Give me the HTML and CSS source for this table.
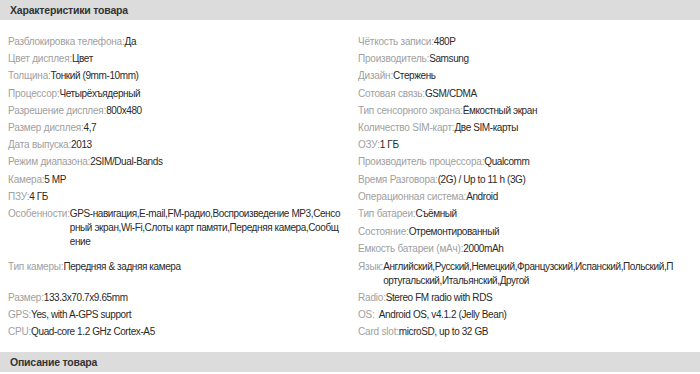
FILE: index.html
```html
<!DOCTYPE html>
<html lang="ru">
<head>
<meta charset="utf-8">
<link rel="stylesheet" href="styles.css">
</head>
<body>
<div class="section">
  <h2 class="bar">Характеристики товара</h2>
  <ul class="specs">
    <li><span class="k">Разблокировка телефона:</span><span class="v">Да</span></li>
    <li><span class="k">Чёткость записи:</span><span class="v">480P</span></li>
    <li><span class="k">Цвет дисплея:</span><span class="v">Цвет</span></li>
    <li><span class="k">Производитель:</span><span class="v">Samsung</span></li>
    <li><span class="k">Толщина:</span><span class="v">Тонкий (9mm-10mm)</span></li>
    <li><span class="k">Дизайн:</span><span class="v">Стержень</span></li>
    <li><span class="k">Процессор:</span><span class="v">Четырёхъядерный</span></li>
    <li><span class="k">Сотовая связь:</span><span class="v">GSM/CDMA</span></li>
    <li><span class="k">Разрешение дисплея:</span><span class="v">800x480</span></li>
    <li><span class="k">Тип сенсорного экрана:</span><span class="v">Ёмкостный экран</span></li>
    <li><span class="k">Размер дисплея:</span><span class="v">4,7</span></li>
    <li><span class="k">Количество SIM-карт:</span><span class="v">Две SIM-карты</span></li>
    <li><span class="k">Дата выпуска:</span><span class="v">2013</span></li>
    <li><span class="k">ОЗУ:</span><span class="v">1 ГБ</span></li>
    <li><span class="k">Режим диапазона:</span><span class="v">2SIM/Dual-Bands</span></li>
    <li><span class="k">Производитель процессора:</span><span class="v">Qualcomm</span></li>
    <li><span class="k">Камера:</span><span class="v">5 MP</span></li>
    <li><span class="k">Время Разговора:</span><span class="v">(2G) / Up to 11 h (3G)</span></li>
    <li><span class="k">ПЗУ:</span><span class="v">4 ГБ</span></li>
    <li><span class="k">Операционная система:</span><span class="v">Android</span></li>
    <li class="tall"><span class="k">Особенности:</span><span class="v fixed">GPS-навигация,E-mail,FM-радио,Воспроизведение MP3,Сенсо<br>рный экран,Wi-Fi,Слоты карт памяти,Передняя камера,Сообщ<br>ение</span></li>
    <li><span class="k">Тип батареи:</span><span class="v">Съёмный</span></li>
    <li><span class="k">Состояние:</span><span class="v">Отремонтированный</span></li>
    <li><span class="k">Емкость батареи (мАч):</span><span class="v">2000mAh</span></li>
    <li><span class="k">Тип камеры:</span><span class="v">Передняя &amp; задняя камера</span></li>
    <li><span class="k">Язык:</span><span class="v">Английский,Русский,Немецкий,Французский,Испанский,Польский,Португальский,Итальянский,Другой</span></li>
    <li><span class="k">Размер:</span><span class="v">133.3x70.7x9.65mm</span></li>
    <li><span class="k">Radio:</span><span class="v">Stereo FM radio with RDS</span></li>
    <li><span class="k">GPS:</span><span class="v">Yes, with A-GPS support</span></li>
    <li><span class="k">OS:</span><span class="v">&nbsp; Android OS, v4.1.2 (Jelly Bean)</span></li>
    <li><span class="k">CPU:</span><span class="v">Quad-core 1.2 GHz Cortex-A5</span></li>
    <li><span class="k">Card slot:</span><span class="v">microSD, up to 32 GB</span></li>
  </ul>
  <h2 class="bar">Описание товара</h2>
</div>
</body>
</html>
```

FILE: styles.css
```css
html, body {
  margin: 0;
  padding: 0;
  background: #fff;
}
body {
  font-family: Arial, "Liberation Sans", sans-serif;
  font-size: 10px;
  letter-spacing: -0.2px;
  color: #333;
}
.bar {
  margin: 0;
  height: 20px;
  line-height: 20px;
  padding: 0 10px;
  background: #dcdcdc;
  font-size: 10.5px;
  letter-spacing: -0.2px;
  font-weight: bold;
  color: #333;
}
.specs {
  list-style: none;
  margin: 0;
  padding: 13px 0 11px;
  display: grid;
  grid-template-columns: 350px 350px;
}
.specs li {
  display: flex;
  align-items: flex-start;
  padding: 2px 4px 1.2px 8px;
  line-height: 14px;
}
.specs li:nth-child(even) {
  padding-right: 24px;
}
.specs li.tall {
  grid-row: span 3;
  padding-bottom: 9px;
}
.k {
  color: #a0a0a0;
  white-space: nowrap;
}
.v {
  color: #2a2a2a;
  letter-spacing: -0.4px;
  word-break: break-all;
}
.v.fixed {
  white-space: nowrap;
}
```
